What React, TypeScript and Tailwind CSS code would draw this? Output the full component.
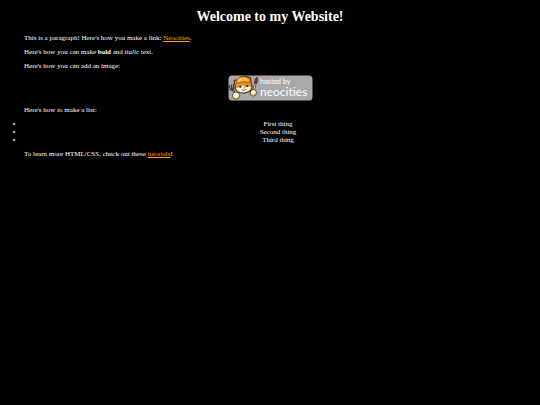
import React from 'react';

const THINGS = ['First thing', 'Second thing', 'Third thing'];

const HostedBadge: React.FC = () => (
  <svg viewBox="0 0 85 26" className="w-[85px] h-[26px]" role="img" aria-label="hosted by neocities">
    <rect x="0.5" y="0.5" width="84" height="25" rx="3.5" fill="#a9a9a9" />
    {/* paintbrush */}
    <path d="M25.5 15 L27.6 8" stroke="#3a2a26" strokeWidth="2.2" strokeLinecap="round" />
    <path d="M25.7 14.5 L27.3 9" stroke="#e6ddd0" strokeWidth="1" strokeLinecap="round" />
    <path d="M26.6 7.5 Q26.4 4 29 2 Q30.2 5 28.8 8 Z" fill="#b3262c" stroke="#4a1316" strokeWidth="0.7" />
    {/* fork */}
    <path d="M4 13.5 L8 20" stroke="#2d3238" strokeWidth="2" strokeLinecap="round" />
    <path d="M1.2 10.5 L2.2 14.6 Q4.2 16.2 5.8 13.4 L5.2 9.2 M3.2 9.8 L4.2 14.5" fill="none" stroke="#30363d" strokeWidth="1.1" strokeLinecap="round" />
    <path d="M4.4 14.6 L7.5 19.5" stroke="#9aa2a9" strokeWidth="0.7" />
    {/* paws */}
    <circle cx="8" cy="20.5" r="3.6" fill="#fff3df" stroke="#44301e" strokeWidth="0.8" />
    <path d="M5.6 22.4 Q8 25 11 21.5" fill="none" stroke="#d98a3c" strokeWidth="0.9" />
    <circle cx="25.3" cy="17.8" r="3.2" fill="#fff3df" stroke="#44301e" strokeWidth="0.8" />
    <path d="M23.4 19.8 Q25.8 21.6 27.7 18.4" fill="none" stroke="#d98a3c" strokeWidth="0.9" />
    {/* head */}
    <path
      d="M7 10.8 L6 5.2 L9.4 5.2 Q12.5 0.9 17 1.4 L22.5 2.6 L23.2 8 Q25.6 13 21.8 16.2 Q17 19.4 11.8 17.6 Q6.8 15.8 7 10.8 Z"
      fill="#e58e2d"
      stroke="#3b2411"
      strokeWidth="1"
      strokeLinejoin="round"
    />
    <path d="M8 13.4 Q10.5 11.6 13 13 L15 9.8 L17 12.4 Q20.5 10.8 23 12.6 Q21.8 16 18 17 Q10.6 18.4 8 13.4 Z" fill="#fff7eb" />
    {/* hard hat */}
    <path d="M8.2 8.4 Q8.2 2.3 15 1.8 Q21 1.6 22.3 7.4 Q15 5.8 8.2 8.4 Z" fill="#f0bb35" stroke="#80500e" strokeWidth="0.7" />
    <path d="M11 6.4 Q11.7 4 14 3.3 M16 2.6 Q18.2 3 18.6 5.2" fill="none" stroke="#ffe27a" strokeWidth="0.9" />
    <circle cx="12.2" cy="11.7" r="0.9" fill="#29170d" />
    <circle cx="19" cy="11" r="0.9" fill="#29170d" />
    <path d="M14.7 12.8 L16.8 12.6 L15.9 13.8 Z" fill="#9b4335" />
    <path d="M13.7 14.8 Q16 16.5 18.2 14.2" fill="none" stroke="#5c3520" strokeWidth="0.7" />
    <text x="32" y="9" fill="#ffffff" fontSize="7" fontFamily="Lato, sans-serif">
      hosted by
    </text>
    <text x="32" y="21" fill="#ffffff" fontSize="12" fontFamily="Lato, sans-serif">
      neocities
    </text>
  </svg>
);

const App: React.FC = () => {
  return (
    <div className="min-h-screen bg-black pt-[9px] text-[7px] leading-[8px] text-white font-['Liberation_Serif','Times_New_Roman',serif]">
      <h1 className="text-center text-[14px] leading-[16px] font-bold">Welcome to my Website!</h1>

      <div className="mt-[9px] px-6 space-y-[6px]">
        <p>
          This is a paragraph! Here's how you make a link:{' '}
          <a href="https://neocities.org" className="text-[#ffa500] underline">Neocities</a>.
        </p>
        <p>
          Here's how you can make <strong>bold</strong> and <em>italic</em> text.
        </p>
        <p>Here's how you can add an image:</p>
      </div>

      <div className="mt-[5px] flex justify-center">
        <HostedBadge />
      </div>

      <p className="mt-[5px] px-6">Here's how to make a list:</p>

      <ul className="my-[6px] pl-6 pr-2 list-disc text-center">
        {THINGS.map((thing) => (
          <li key={thing}>{thing}</li>
        ))}
      </ul>

      <p className="px-6">
        To learn more HTML/CSS, check out these{' '}
        <a href="https://neocities.org/tutorials" className="text-[#ffa500] underline">tutorials</a>!
      </p>
    </div>
  );
};

export default App;
